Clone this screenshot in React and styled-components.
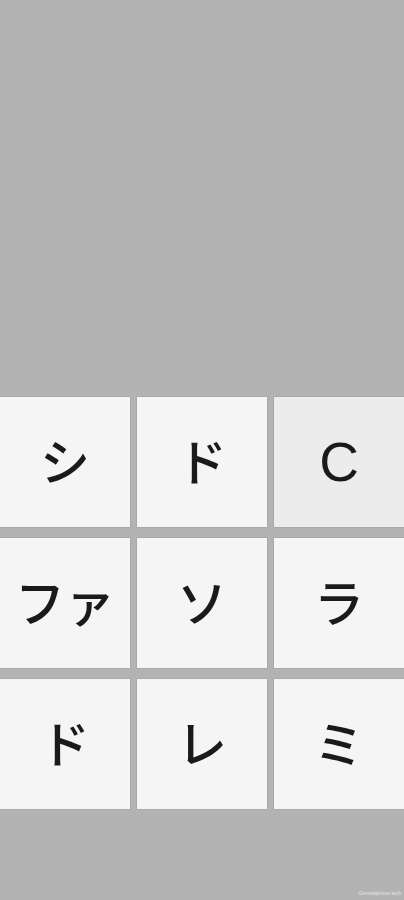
import styled, { createGlobalStyle } from 'styled-components';

const keys = [
  { label: 'シ' },
  { label: 'ド' },
  { label: 'C', active: true, latin: true },
  { label: 'ファ' },
  { label: 'ソ' },
  { label: 'ラ' },
  { label: 'ド' },
  { label: 'レ' },
  { label: 'ミ' },
];

const App = () => {
  return (
    <>
      <GlobalStyle />
      <Page>
        <Display />
        <Keypad>
          {keys.map((k, i) => (
            <Key key={i} $active={k.active} $latin={k.latin}>
              {k.label}
            </Key>
          ))}
        </Keypad>
        <Footer>
          <Credit>Genmaipinner tech</Credit>
        </Footer>
      </Page>
    </>
  );
};

export default App;

const GlobalStyle = createGlobalStyle`
  html, body {
    margin: 0;
    padding: 0;
    background-color: #b3b3b3;
  }
  #root {
    height: 900px;
  }
`;

const Page = styled.div`
  display: flex;
  flex-direction: column;
  height: 100%;
  background-color: #b3b3b3;
  font-family: 'Noto Sans CJK JP', 'Noto Sans', sans-serif;
`;

const Display = styled.div`
  height: 397px;
`;

const Keypad = styled.div`
  display: grid;
  grid-template-columns: repeat(3, 1fr);
  grid-auto-rows: 130px;
  column-gap: 7px;
  row-gap: 11px;
`;

const Key = styled.button`
  display: flex;
  align-items: center;
  justify-content: center;
  margin: 0;
  padding: ${(p) => (p.$latin ? '0' : '0 0 6px')};
  border: none;
  background-color: ${(p) => (p.$active ? '#ececec' : '#f5f5f5')};
  box-shadow: 0 0 1px 0 rgba(0, 0, 0, 0.35);
  color: #1a1a1a;
  font-family: ${(p) => (p.$latin ? "'Liberation Sans', Arial, sans-serif" : "'Noto Sans CJK JP', 'Noto Sans', sans-serif")};
  font-size: ${(p) => (p.$latin ? '55px' : '50px')};
  font-weight: ${(p) => (p.$latin ? 400 : 500)};
  line-height: 1;
`;

const Footer = styled.div`
  flex: 1;
  display: flex;
  align-items: flex-end;
  justify-content: flex-end;
  padding: 0 3px 4px 0;
`;

const Credit = styled.span`
  font-family: 'Liberation Sans', sans-serif;
  font-size: 5px;
  color: #e6e6e6;
`;
